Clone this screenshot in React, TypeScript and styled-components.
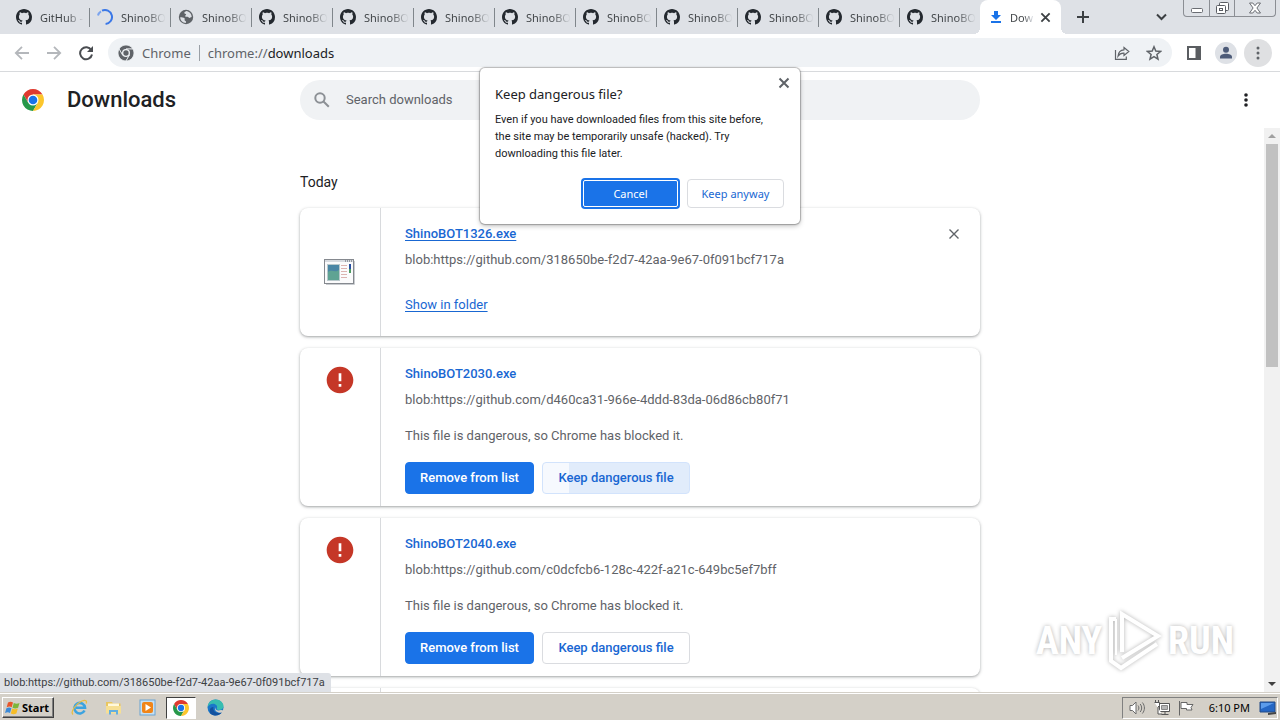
import React from 'react';
import styled, { createGlobalStyle, css } from 'styled-components';

const uiFont = `'Noto Sans', 'DejaVu Sans', sans-serif`;
const pageFont = `Roboto, 'Liberation Sans', sans-serif`;

const GlobalStyle = createGlobalStyle`
  * { box-sizing: border-box; }
  body { margin: 0; background: #fff; font-family: ${pageFont}; }
  button { font: inherit; padding: 0; margin: 0; border: 0; background: none; color: inherit; }
  svg { display: block; flex: none; }
`;

const Desktop = styled.div`
  position: relative;
  display: flex;
  flex-direction: column;
  height: 100vh;
  overflow: hidden;
`;

/* ---------- tab strip ---------- */

const TabStrip = styled.div`
  display: flex;
  align-items: flex-end;
  height: 34px;
  padding-left: 8px;
  background: #dee1e6;
  font-family: ${uiFont};
  font-size: 11px;
  color: #3c4043;
`;

const Tab = styled.button<{ $active?: boolean; $line?: boolean }>`
  position: relative;
  display: flex;
  align-items: center;
  gap: 8px;
  flex: 0 1 81px;
  min-width: 0;
  height: 34px;
  padding: 0 2px 0 8px;
  text-align: left;
  ${(p) => p.$line && css`
    &::after {
      content: '';
      position: absolute;
      right: -1px;
      top: 8px;
      width: 1px;
      height: 19px;
      background: #80868b;
    }
  `}
  ${(p) => p.$active && css`
    gap: 6px;
    padding-right: 10px;
    background: #fff;
    border-radius: 8px 8px 0 0;
    &::before,
    &::after {
      content: '';
      position: absolute;
      bottom: 0;
      width: 6px;
      height: 6px;
    }
    &::before {
      left: -6px;
      background: radial-gradient(circle at 0 0, transparent 6px, #fff 6px);
    }
    &::after {
      right: -6px;
      background: radial-gradient(circle at 100% 0, transparent 6px, #fff 6px);
    }
  `}
`;

const TabLabel = styled.span`
  flex: 1;
  white-space: nowrap;
  background: linear-gradient(to right, #3c4043 55%, #dee1e6 95%);
  background-clip: text;
  color: transparent;
`;

const StripButton = styled.button<{ $push?: boolean }>`
  display: grid;
  place-items: center;
  width: 28px;
  height: 34px;
  margin-left: ${(p) => (p.$push ? 'auto' : '8px')};
  margin-right: ${(p) => (p.$push ? '105px' : '0')};
`;

const WindowControls = styled.div`
  position: absolute;
  top: 0;
  right: 4px;
  display: flex;
  height: 17px;
  border: 1px solid #8b8e94;
  border-top: 0;
  border-radius: 0 0 4px 4px;
`;

const WindowButton = styled.button<{ $wide?: boolean }>`
  display: grid;
  place-items: center;
  width: ${(p) => (p.$wide ? 41 : 25)}px;
  & + & { border-left: 1px solid #8b8e94; }
`;

/* ---------- toolbar ---------- */

const Toolbar = styled.div`
  display: flex;
  align-items: center;
  flex: none;
  height: 38px;
  padding: 0 8px 0 6px;
  border-bottom: 1px solid #d8dadd;
  background: #fff;
`;

const ToolButton = styled.button<{ $round?: string }>`
  display: grid;
  place-items: center;
  flex: none;
  width: 32px;
  height: 28px;
  ${(p) => p.$round && css`
    width: 28px;
    margin-left: 2px;
    border-radius: 50%;
    background: ${p.$round};
  `}
`;

const Omnibox = styled.form`
  display: flex;
  align-items: center;
  flex: 1;
  height: 29px;
  margin: 0 6px;
  padding: 0 2px 0 10px;
  border-radius: 15px;
  background: #eff2f5;
  font-family: ${uiFont};
  font-size: 13px;
  color: #5f6368;
`;

const Origin = styled.span`
  margin-left: 8px;
  padding-right: 8px;
  border-right: 1px solid #9aa0a6;
  line-height: 16px;
`;

const Address = styled.span`
  flex: 1;
  margin-left: 8px;
  b { font-weight: 400; color: #202124; }
`;

/* ---------- downloads page ---------- */

const PageHeader = styled.header`
  display: grid;
  grid-template-columns: 1fr 680px 1fr;
  align-items: center;
  flex: none;
  height: 56px;
  background: #fff;
`;

const Brand = styled.div`
  display: flex;
  align-items: center;
  gap: 23px;
  padding-left: 22px;
  h1 {
    margin: 0;
    font-size: 22px;
    line-height: 28px;
    font-weight: 500;
    color: #202124;
  }
`;

const SearchBox = styled.label`
  display: flex;
  align-items: center;
  gap: 16px;
  height: 40px;
  padding: 0 14px;
  border-radius: 20px;
  background: #f0f2f4;
  input {
    flex: 1;
    border: 0;
    outline: 0;
    background: none;
    padding: 0;
    font: 13px/20px ${pageFont};
    color: #202124;
  }
  input::placeholder { color: #5f6368; opacity: 1; }
`;

const MoreButton = styled.button`
  justify-self: end;
  display: grid;
  place-items: center;
  width: 32px;
  height: 32px;
  margin-right: 18px;
`;

const PageBody = styled.div`
  display: flex;
  flex: 1;
  min-height: 0;
`;

const ListArea = styled.main`
  display: flex;
  flex-direction: column;
  align-items: center;
  flex: 1;
  min-width: 0;
  padding: 44px 0 0 16px;
  overflow: hidden;
  background: #fff;
`;

const List = styled.section`
  display: flex;
  flex-direction: column;
  gap: 12px;
  width: 100%;
  max-width: 680px;
  h2 {
    margin: 0 0 4px;
    font-size: 14px;
    line-height: 20px;
    font-weight: 400;
    color: #202124;
  }
`;

const Card = styled.article`
  display: flex;
  flex: none;
  border-radius: 8px;
  background: #fff;
  box-shadow: 0 1px 2px rgba(60, 64, 67, 0.3), 0 1px 3px 1px rgba(60, 64, 67, 0.15);
`;

const IconCell = styled.div<{ $center?: boolean }>`
  display: flex;
  justify-content: center;
  align-items: ${(p) => (p.$center ? 'center' : 'flex-start')};
  width: 81px;
  padding: ${(p) => (p.$center ? '0 2px 0 0' : '16px 0 0')};
  border-right: 1px solid #d8dadd;
`;

const CardBody = styled.div`
  display: flex;
  flex-direction: column;
  align-items: flex-start;
  flex: 1;
  padding: 16px 16px 12px 24px;
  font-size: 13px;
  line-height: 20px;
  color: #5f6368;
`;

const TitleRow = styled.div`
  display: flex;
  justify-content: space-between;
  align-items: center;
  align-self: stretch;
  height: 20px;
`;

const FileLink = styled.a<{ $underline?: boolean; $bold?: boolean }>`
  color: #1967d2;
  font-weight: ${(p) => (p.$bold ? 500 : 400)};
  text-decoration: ${(p) => (p.$underline ? 'underline' : 'none')};
  text-underline-offset: 2px;
`;

const SourceUrl = styled.div`
  margin-top: 6px;
`;

const Note = styled.div`
  margin-top: 16px;
`;

const FolderRow = styled.div`
  margin-top: 25px;
  padding-bottom: 9px;
`;

const Actions = styled.div`
  display: flex;
  gap: 8px;
  margin-top: 16px;
`;

const ActionButton = styled.button<{ $primary?: boolean; $ripple?: boolean }>`
  height: 32px;
  padding: 0 14px;
  border: 1px solid ${(p) => (p.$primary ? '#1a73e8' : '#dadce0')};
  border-radius: 4px;
  background: ${(p) => (p.$primary ? '#1a73e8' : '#fff')};
  color: ${(p) => (p.$primary ? '#fff' : '#1967d2')};
  font-size: 13px;
  font-weight: 500;
  min-width: ${(p) => (p.$primary ? 129 : 148)}px;
  ${(p) => p.$ripple && css`
    border-color: #d2e3fc;
    background: linear-gradient(to right, #f6f9fe 26px, #e1ecfb 26px);
  `}
`;

const CloseButton = styled.button`
  display: grid;
  place-items: center;
  width: 20px;
  height: 20px;
`;

const Scrollbar = styled.div`
  display: flex;
  flex-direction: column;
  align-items: center;
  width: 16px;
  background: #f1f1f1;
`;

const ScrollArrow = styled.div`
  display: grid;
  place-items: center;
  width: 16px;
  height: 16px;
`;

const ScrollTrack = styled.div`
  flex: 1;
  width: 12px;
`;

const ScrollThumb = styled.div`
  height: 42%;
  background: #c1c1c1;
`;

/* ---------- overlays ---------- */

const Dialog = styled.div`
  position: absolute;
  top: 68px;
  left: 50%;
  margin-left: -160px;
  width: 320px;
  padding: 16px 16px 16px 15px;
  border-radius: 5px;
  background: #fff;
  box-shadow: 0 0 1px 1px rgba(0, 0, 0, 0.25), 0 2px 5px rgba(0, 0, 0, 0.25);
  font-family: ${uiFont};
  color: #202124;
  h2 {
    margin: 0;
    font: 400 13px/20px ${uiFont};
  }
  p {
    margin: 7px 0 0;
    font: 11px/17px ${pageFont};
  }
`;

const DialogClose = styled.button`
  position: absolute;
  top: 7px;
  right: 8px;
  display: grid;
  place-items: center;
  width: 16px;
  height: 16px;
`;

const DialogActions = styled.div`
  display: flex;
  justify-content: flex-end;
  gap: 8px;
  margin-top: 17px;
`;

const DialogButton = styled.button<{ $primary?: boolean }>`
  width: 97px;
  height: 29px;
  border-radius: 4px;
  border: 1px solid #dadce0;
  font-size: 11px;
  color: #1967d2;
  ${(p) => p.$primary && css`
    border-color: #fff;
    background: #1a73e8;
    color: #fff;
    box-shadow: 0 0 0 2px #1a73e8;
    width: 95px;
    height: 27px;
    margin: 1px;
    border-radius: 2px;
  `}
`;

const StatusBubble = styled.div`
  position: absolute;
  left: 0;
  bottom: 28px;
  height: 19px;
  padding: 0 6px 0 4px;
  border-radius: 0 3px 0 0;
  background: #dee1e6;
  font: 11px/19px ${pageFont};
  color: #3c4043;
  white-space: nowrap;
`;

const Watermark = styled.div`
  position: absolute;
  right: 46px;
  bottom: 44px;
  display: flex;
  align-items: center;
  gap: 4px;
  font: 700 38px/70px 'Roboto Condensed', 'Open Sans Condensed', Roboto, sans-serif;
  color: #fff;
  text-shadow: 0 0 4px rgba(0, 0, 0, 0.3);
  pointer-events: none;
  svg { filter: drop-shadow(0 0 2px rgba(0, 0, 0, 0.3)); }
`;

/* ---------- taskbar ---------- */

const Taskbar = styled.footer`
  display: flex;
  align-items: center;
  flex: none;
  height: 28px;
  padding: 3px 2px 1px;
  border-top: 1px solid #d4d0c8;
  box-shadow: inset 0 1px #fff;
  background: #d4d0c8;
  font: 11px/16px ${uiFont};
  color: #000;
`;

const StartButton = styled.button`
  display: flex;
  align-items: center;
  gap: 1px;
  height: 21px;
  width: 52px;
  padding-left: 2px;
  margin-right: 10px;
  border: 1px solid;
  border-color: #fff #404040 #404040 #fff;
  box-shadow: inset -1px -1px #808080;
  font-weight: 700;
`;

const TaskButton = styled.button<{ $pressed?: boolean }>`
  display: grid;
  place-items: center;
  width: 30px;
  height: 22px;
  margin-right: 4px;
  ${(p) => p.$pressed && css`
    border: 1px solid;
    border-color: #404040 #fff #fff #404040;
    background: #fff;
  `}
`;

const Tray = styled.div`
  display: flex;
  align-items: center;
  gap: 8px;
  height: 22px;
  margin-left: auto;
  padding: 0 0 0 6px;
  border: 1px solid;
  border-color: #808080 #fff #fff #808080;
  time { margin: 0 1px 0 7px; }
`;

/* ---------- drawings ---------- */

const GithubMark = () => (
  <svg width="16" height="16" viewBox="0 0 16 16" fill="#24292f">
    <path d="M8 0C3.58 0 0 3.58 0 8c0 3.54 2.29 6.53 5.47 7.59.4.07.55-.17.55-.38 0-.19-.01-.82-.01-1.49-2.01.37-2.53-.49-2.69-.94-.09-.23-.48-.94-.82-1.13-.28-.15-.68-.52-.01-.53.63-.01 1.08.58 1.23.82.72 1.21 1.87.87 2.33.66.07-.52.28-.87.51-1.07-1.78-.2-3.64-.89-3.64-3.95 0-.87.31-1.59.82-2.15-.08-.2-.36-1.02.08-2.12 0 0 .67-.21 2.2.82.64-.18 1.32-.27 2-.27s1.36.09 2 .27c1.53-1.04 2.2-.82 2.2-.82.44 1.1.16 1.92.08 2.12.51.56.82 1.27.82 2.15 0 3.07-1.87 3.75-3.65 3.95.29.25.54.73.54 1.48 0 1.07-.01 1.93-.01 2.2 0 .21.15.46.55.38A8.01 8.01 0 0 0 16 8c0-4.42-3.58-8-8-8z" />
  </svg>
);

const Spinner = () => (
  <svg width="16" height="16" viewBox="0 0 16 16" fill="none" stroke="#3b78e7" strokeWidth="2">
    <path d="M1 6.500A7 7 0 0 1 4 2.300" stroke="#7ba4ee" />
    <path d="M5 1.700A7 7 0 1 1 8.600 15" />
  </svg>
);

const Globe = () => (
  <svg width="16" height="16" viewBox="0 0 16 16">
    <circle cx="8" cy="8" r="7.2" fill="#5f6368" />
    <path d="M2.2 8.3c1.6.1 3.4.2 4.3 1 .7.7-.3 1.500.2 2.100.5.5 1.100.3 1.200 1v1.500C4.700 13.900 2.200 11.400 2.200 8.300zM8.300 2.100c-.8.700-2 .8-2 1.800s1.600.5 1.800 1.300c.2.800-1 1-1 1.700 0 .8 1.400.9 2.400.9s1 1.200 1.900 1.200 1.100-.9 2.300-1c-.1-3-2.300-5.500-5.400-5.900z" fill="#dee1e6" />
  </svg>
);

const DownloadIcon = () => (
  <svg width="16" height="16" viewBox="0 0 16 16" fill="#1a73e8">
    <path d="M6 2h4v4h3L8 11 3 6h3zM3 12h10v2H3z" />
  </svg>
);

const Cross = ({ size, width, color }: { size: number; width: number; color: string }) => (
  <svg width={size} height={size} viewBox="0 0 12 12" stroke={color} strokeWidth={width}>
    <path d="M1.500 1.500l9 9M10.500 1.500l-9 9" />
  </svg>
);

const ArrowIcon = ({ back }: { back?: boolean }) => (
  <svg width="16" height="16" viewBox="0 0 16 16" fill="none" stroke="#b4b7bb" strokeWidth="1.800">
    {back ? <path d="M15 8H2.500M8 1.800L1.800 8 8 14.200" /> : <path d="M1 8h12.500M8 1.800L14.200 8 8 14.200" />}
  </svg>
);

const ReloadIcon = () => (
  <svg width="16" height="16" viewBox="0 0 16 16">
    <path d="M13.300 5.200A6 6 0 1 0 14 9.500" fill="none" stroke="#4a4d51" strokeWidth="2" />
    <path d="M15 1v6H9z" fill="#4a4d51" />
  </svg>
);

const ChromeLogo = ({ size, mono }: { size: number; mono?: boolean }) => (
  <svg width={size} height={size} viewBox="0 0 24 24">
    <g stroke={mono ? '#eff2f5' : 'none'} strokeWidth="1.200">
      <path d="M12 6H22.390A12 12 0 0 0 1.610 6L6.800 15 12 12z" fill={mono ? '#5f6368' : '#df3a2f'} />
      <path d="M1.610 6A12 12 0 0 0 12 24L17.200 15 12 12 6.800 15z" fill={mono ? '#5f6368' : '#27984a'} />
      <path d="M22.390 6A12 12 0 0 1 12 24L17.200 15 12 12V6z" fill={mono ? '#5f6368' : '#fcc62c'} />
    </g>
    <circle cx="12" cy="12" r="6" fill={mono ? '#eff2f5' : '#fff'} />
    <circle cx="12" cy="12" r={mono ? 4 : 4.700} fill={mono ? '#5f6368' : '#1a73e8'} />
  </svg>
);

const ShareIcon = () => (
  <svg width="16" height="16" viewBox="0 0 16 16" fill="none" stroke="#5f6368" strokeWidth="1.200">
    <path d="M1.500 5v9.400h10.800v-3M10 2.500l4.800 4-4.800 4V8.200C7.500 8 5.500 9 4 11.200 4.300 7.500 6.500 5 10 4.800z" />
  </svg>
);

const StarIcon = () => (
  <svg width="16" height="16" viewBox="0 0 16 16" fill="none" stroke="#5f6368" strokeWidth="1.500">
    <path d="M8 1.800l1.800 4.300 4.700.4-3.600 3 1.100 4.600L8 11.700l-4 2.400 1.100-4.600-3.600-3 4.700-.4z" />
  </svg>
);

const SidePanelIcon = () => (
  <svg width="14" height="14" viewBox="0 0 14 14">
    <path d="M1 1h12v12H1z" fill="#fff" stroke="#5a5d61" strokeWidth="2" />
    <path d="M8.500 1H13v12H8.500z" fill="#5a5d61" />
  </svg>
);

const PersonIcon = () => (
  <svg width="22" height="22" viewBox="0 0 22 22">
    <circle cx="11" cy="11" r="11" fill="#dee1e6" />
    <circle cx="11" cy="7.800" r="3" fill="#4d5b78" />
    <path d="M5 16.500v-1.500c0-2.200 3-3.300 6-3.300s6 1.100 6 3.300v1.500z" fill="#4d5b78" />
  </svg>
);

const Dots = ({ color, r }: { color: string; r: number }) => (
  <svg width="4" height="14" viewBox="0 0 4 14" fill={color}>
    <circle cx="2" cy="2" r={r} />
    <circle cx="2" cy="7" r={r} />
    <circle cx="2" cy="12" r={r} />
  </svg>
);

const SearchIcon = () => (
  <svg width="16" height="16" viewBox="0 0 16 16" fill="none" stroke="#8c9095" strokeWidth="2">
    <circle cx="6" cy="6" r="4.700" />
    <path d="M9.500 9.500l5.300 5.300" />
  </svg>
);

const ExeIcon = () => (
  <svg width="31" height="26" viewBox="0 0 31 26">
    <rect x="0.500" y="0.500" width="29" height="24" fill="#fbfbfc" stroke="#85898f" />
    <path d="M1 1h28v2H1z" fill="#d8dbe0" />
    <path d="M21 2h7" stroke="#555a66" strokeDasharray="1 1" />
    <rect x="3.500" y="5.500" width="12" height="16" fill="#5fa393" stroke="#b9c9cc" />
    <path d="M4 6h11v5c-4 3-7-1-11 2z" fill="#4a86a5" />
    <path d="M17 6.500h6M17 9.500h6M17 12.500h6M17 15.500h6M17 18.500h6" stroke="#dcb4b1" />
    <path d="M26 5v5" stroke="#284fa0" strokeWidth="2" />
    <path d="M26 10v4" stroke="#4d9b62" strokeWidth="2" />
    <path d="M30.500 2v23.500H2" fill="none" stroke="#c9ccd0" />
  </svg>
);

const DangerIcon = () => (
  <svg width="32" height="32" viewBox="0 0 24 24">
    <path d="M12 2C6.480 2 2 6.480 2 12s4.480 10 10 10 10-4.480 10-10S17.520 2 12 2zm1 15h-2v-2h2v2zm0-4h-2V7h2v6z" fill="#c53727" />
  </svg>
);

const PlayMark = () => (
  <svg width="58" height="64" viewBox="0 0 58 64" fill="none" stroke="#fff" strokeWidth="4">
    <path d="M16 43V5l36 22-36 22" />
    <path d="M10 10H5v42l10 7 36-24" />
    <path d="M10 10v36" strokeWidth="2" />
  </svg>
);

const WindowsFlag = () => (
  <svg width="16" height="16" viewBox="0 0 16 16">
    <path d="M3 2.500c2-1.200 3.500-1 5 0L6.700 7.300c-1.500-1-3-1-5 0z" fill="#e8562a" />
    <path d="M8.800 2.900c2 1 3.700 1 5.700 0l-1.400 4.800c-2 1-3.700 1-5.600 0z" fill="#7db63a" />
    <path d="M1.400 8.300c2-1 3.500-1 5 0L5 13c-1.500-1-3-1-5 0z" fill="#3b8ad8" />
    <path d="M7.200 8.600c2 1 3.700 1 5.600 0l-1.400 4.800c-2 1-3.700 1-5.600 0z" fill="#f6bd27" />
  </svg>
);

const IeIcon = () => (
  <svg width="17" height="17" viewBox="0 0 17 17" fill="none">
    <path d="M13.500 11.500A5.300 5.300 0 1 1 14 8.700H5" stroke="#3ba3e0" strokeWidth="2.600" />
    <path d="M2 15.500C-1 13 5 4.500 11 2c4-1.600 5 0 4.200 2.500" stroke="#e9bd42" strokeWidth="1.300" />
  </svg>
);

const FolderIcon = () => (
  <svg width="17" height="17" viewBox="0 0 17 17">
    <path d="M1 3h6l1 1.500h7.500V14H1z" fill="#e9c65f" />
    <path d="M3 4.500h11v4H3z" fill="#fff8dc" />
    <path d="M1 7h15v7.500H1z" fill="#f6df94" />
    <path d="M4 15.500v-4.500h9v4.500h-2v-2.500H6v2.500z" fill="#62aee0" />
  </svg>
);

const PlayerIcon = () => (
  <svg width="17" height="17" viewBox="0 0 17 17">
    <rect x="1" y="1" width="15" height="15" fill="#c6e0f3" stroke="#6ba4d2" />
    <rect x="3" y="3" width="11" height="11" rx="2" fill="#f08519" />
    <path d="M6.500 5v7l5.500-3.500z" fill="#fff" />
  </svg>
);

const EdgeIcon = () => (
  <svg width="17" height="17" viewBox="0 0 17 17">
    <circle cx="8.500" cy="8.500" r="8" fill="#1b77c9" />
    <path d="M.6 8C1 3.500 4.500.5 8.500.5c5 0 8 3.500 8 6.500 0 2.500-2 4-4.500 4-1.800 0-2.500-.6-2.200-1.200C11 7 9 4.700 6 4.700 3.500 4.700 1.500 6 .6 8z" fill="#37bdb0" />
    <path d="M6.500 8c-1 3 1.500 6.300 5.500 5.800 1.500-.2 2.500-.7 3.300-1.300C13 17 7 18 3.500 14.500 1.500 11 3.500 8 6.500 8z" fill="#13519f" />
    <path d="M8.500 8.300c-.8 2.500 2 4 5.500 2.700l3 .5-.5 2-4 .2C9.500 13.500 7 11 8.500 8.300z" fill="#d4d0c8" />
  </svg>
);

const SpeakerIcon = () => (
  <svg width="17" height="16" viewBox="0 0 17 16" fill="none" stroke="#6b6b6b">
    <path d="M1 5.500h2.500L7 2v12L3.500 10.500H1z" fill="#fff" />
    <path d="M9 5.500c1.200 1.500 1.200 3.500 0 5M11.200 4c2 2.500 2 5.500 0 8M13.400 2.500c2.700 3.300 2.700 7.700 0 11" />
  </svg>
);

const NetworkIcon = () => (
  <svg width="16" height="16" viewBox="0 0 16 16" stroke="#555">
    <path d="M5.500 3.500h10v8h-10zM7.500 14.500h7M11 12v2" fill="#fff" />
    <path d="M7.500 5.500h6v4h-6z" fill="#b6b6b6" stroke="#888" />
    <path d="M.500 2.500h5v3l-1.500 1.500v7h4M1.500 0v2M4.500 0v2" fill="#fff" />
  </svg>
);

const FlagIcon = () => (
  <svg width="16" height="16" viewBox="0 0 16 16" fill="#fff" stroke="#666">
    <path d="M1.500 1v14.500M3 2.500h6v2h6l-2 3 1 2.500H8.500V8.500H3z" />
  </svg>
);

const MonitorIcon = () => (
  <svg width="18" height="16" viewBox="0 0 18 16">
    <path d="M1 2h15v10H1z" fill="#2466c4" stroke="#234a86" />
    <path d="M2 3h13L2 9z" fill="#5b9bea" />
    <path d="M9 13l8-1v2l-8 1z" fill="#444" />
  </svg>
);

/* ---------- content ---------- */

const tabs = [
  { label: 'GitHub -', icon: <GithubMark /> },
  { label: 'ShinoBO', icon: <Spinner /> },
  { label: 'ShinoBO', icon: <Globe /> },
  ...Array.from({ length: 9 }, () => ({ label: 'ShinoBO', icon: <GithubMark /> })),
];

const blocked = [
  { name: 'ShinoBOT2030.exe', url: 'blob:https://github.com/d460ca31-966e-4ddd-83da-06d86cb80f71', ripple: true },
  { name: 'ShinoBOT2040.exe', url: 'blob:https://github.com/c0dcfcb6-128c-422f-a21c-649bc5ef7bff', ripple: false },
];

export default function App() {
  return (
    <Desktop>
      <GlobalStyle />
      <TabStrip>
        {tabs.map((t, i) => (
          <Tab key={i} $line={i < tabs.length - 1}>
            {t.icon}
            <TabLabel>{t.label}</TabLabel>
          </Tab>
        ))}
        <Tab $active>
          <DownloadIcon />
          <TabLabel>Dow</TabLabel>
          <Cross size={11} width={2} color="#3c4043" />
        </Tab>
        <StripButton aria-label="New tab">
          <svg width="12" height="12" viewBox="0 0 12 12" stroke="#3c4043" strokeWidth="2">
            <path d="M6 0v12M0 6h12" />
          </svg>
        </StripButton>
        <StripButton $push aria-label="Search tabs">
          <svg width="11" height="8" viewBox="0 0 11 8" fill="none" stroke="#3c4043" strokeWidth="2">
            <path d="M1 1.500L5.500 6 10 1.500" />
          </svg>
        </StripButton>
      </TabStrip>
      <WindowControls>
        <WindowButton aria-label="Minimize">
          <svg width="12" height="16" viewBox="0 0 12 16" fill="#fff" stroke="#6a6d73">
            <rect x="0.500" y="8.500" width="11" height="4" rx="1" />
          </svg>
        </WindowButton>
        <WindowButton aria-label="Restore">
          <svg width="13" height="14" viewBox="0 0 13 14" fill="#fff" stroke="#5a5d63">
            <rect x="3.500" y="1.500" width="9" height="8" rx="1" />
            <rect x="0.500" y="4.500" width="9" height="8" rx="1" />
            <rect x="3.500" y="7.500" width="3" height="2" />
          </svg>
        </WindowButton>
        <WindowButton $wide aria-label="Close">
          <svg width="12" height="12" viewBox="0 0 12 12" fill="#fff" stroke="#6a6d73">
            <path d="M.5 1h3.300L6 3.700 8.200 1h3.300L7.900 6l3.600 5H8.200L6 8.300 3.800 11H.5L4.100 6z" />
          </svg>
        </WindowButton>
      </WindowControls>

      <Toolbar>
        <ToolButton aria-label="Back"><ArrowIcon back /></ToolButton>
        <ToolButton aria-label="Forward"><ArrowIcon /></ToolButton>
        <ToolButton aria-label="Reload"><ReloadIcon /></ToolButton>
        <Omnibox>
          <ChromeLogo size={16} mono />
          <Origin>Chrome</Origin>
          <Address>chrome://<b>downloads</b></Address>
          <ToolButton type="button" aria-label="Share"><ShareIcon /></ToolButton>
          <ToolButton type="button" aria-label="Bookmark"><StarIcon /></ToolButton>
        </Omnibox>
        <ToolButton aria-label="Side panel"><SidePanelIcon /></ToolButton>
        <ToolButton aria-label="Profile"><PersonIcon /></ToolButton>
        <ToolButton $round="#dfe0e2" aria-label="Menu"><Dots color="#5f6368" r={1.5} /></ToolButton>
      </Toolbar>

      <PageHeader>
        <Brand>
          <ChromeLogo size={22} />
          <h1>Downloads</h1>
        </Brand>
        <SearchBox>
          <SearchIcon />
          <input type="text" aria-label="Search downloads" placeholder="Search downloads" />
        </SearchBox>
        <MoreButton aria-label="More actions"><Dots color="#202124" r={1.8} /></MoreButton>
      </PageHeader>

      <PageBody>
        <ListArea>
          <List>
            <h2>Today</h2>
            <Card>
              <IconCell $center><ExeIcon /></IconCell>
              <CardBody>
                <TitleRow>
                  <FileLink href="#file" $bold $underline>ShinoBOT1326.exe</FileLink>
                  <CloseButton aria-label="Remove from list"><Cross size={12} width={1.4} color="#5f6368" /></CloseButton>
                </TitleRow>
                <SourceUrl>blob:https://github.com/318650be-f2d7-42aa-9e67-0f091bcf717a</SourceUrl>
                <FolderRow><FileLink href="#folder" $underline>Show in folder</FileLink></FolderRow>
              </CardBody>
            </Card>
            {blocked.map((f) => (
              <Card key={f.name}>
                <IconCell><DangerIcon /></IconCell>
                <CardBody>
                  <TitleRow><FileLink href="#file" $bold>{f.name}</FileLink></TitleRow>
                  <SourceUrl>{f.url}</SourceUrl>
                  <Note>This file is dangerous, so Chrome has blocked it.</Note>
                  <Actions>
                    <ActionButton $primary>Remove from list</ActionButton>
                    <ActionButton $ripple={f.ripple}>Keep dangerous file</ActionButton>
                  </Actions>
                </CardBody>
              </Card>
            ))}
            <Card>
              <IconCell><DangerIcon /></IconCell>
              <CardBody />
            </Card>
          </List>
        </ListArea>
        <Scrollbar>
          <ScrollArrow>
            <svg width="8" height="4" viewBox="0 0 8 4" fill="#a0a0a0"><path d="M0 4l4-4 4 4z" /></svg>
          </ScrollArrow>
          <ScrollTrack><ScrollThumb /></ScrollTrack>
          <ScrollArrow>
            <svg width="8" height="4" viewBox="0 0 8 4" fill="#404040"><path d="M0 0l4 4 4-4z" /></svg>
          </ScrollArrow>
        </Scrollbar>
      </PageBody>

      <Taskbar>
        <StartButton><WindowsFlag />Start</StartButton>
        <TaskButton aria-label="Internet Explorer"><IeIcon /></TaskButton>
        <TaskButton aria-label="Explorer"><FolderIcon /></TaskButton>
        <TaskButton aria-label="Media Player"><PlayerIcon /></TaskButton>
        <TaskButton $pressed aria-label="Chrome"><ChromeLogo size={16} /></TaskButton>
        <TaskButton aria-label="Edge"><EdgeIcon /></TaskButton>
        <Tray>
          <SpeakerIcon />
          <NetworkIcon />
          <FlagIcon />
          <time>6:10 PM</time>
          <MonitorIcon />
        </Tray>
      </Taskbar>

      <StatusBubble>blob:https://github.com/318650be-f2d7-42aa-9e67-0f091bcf717a</StatusBubble>
      <Watermark><span>ANY</span><PlayMark /><span>RUN</span></Watermark>

      <Dialog role="dialog" aria-label="Keep dangerous file?">
        <DialogClose aria-label="Close"><Cross size={12} width={2} color="#5f6368" /></DialogClose>
        <h2>Keep dangerous file?</h2>
        <p>
          Even if you have downloaded files from this site before,
          <br />
          the site may be temporarily unsafe (hacked). Try
          <br />
          downloading this file later.
        </p>
        <DialogActions>
          <DialogButton $primary>Cancel</DialogButton>
          <DialogButton>Keep anyway</DialogButton>
        </DialogActions>
      </Dialog>
    </Desktop>
  );
}
